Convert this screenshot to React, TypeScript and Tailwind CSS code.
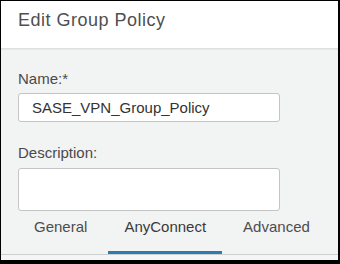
import React from "react";

export default function App() {
  const font = { fontFamily: '"Liberation Sans", Arial, sans-serif' };
  return (
    <div
      className="w-[340px] h-[264px] bg-black pl-px pt-px pr-[2px] pb-[4px]"
      style={font}
    >
      <div className="w-full h-full flex flex-col bg-[#f2f3f3] overflow-hidden">
        <div className="h-[47px] shrink-0 bg-white pl-[17px] pt-[9px]">
          <div className="text-[18px] leading-[20px] tracking-[0.5px] text-[#4f4f4f]">
            Edit Group Policy
          </div>
        </div>
        <div className="h-[2px] shrink-0 bg-gradient-to-b from-[#dcdcdc] to-[#ebebeb]" />
        <div className="flex-1 flex flex-col pl-[17px] pt-[20px]">
          <div className="text-[15px] leading-[18px] text-[#4a4a4a]">Name:*</div>
          <div className="mt-[5px] w-[262px] h-[29px] bg-white border border-[#c4c4c4] rounded-[3px] pl-[13px] flex items-center text-[15px] leading-[18px] text-[#333333]">
            SASE_VPN_Group_Policy
          </div>
          <div className="mt-[22px] text-[15px] leading-[18px] text-[#4a4a4a]">Description:</div>
          <div className="mt-[6px] w-[262px] h-[43px] bg-white border border-[#c4c4c4] rounded-[3px]" />
          <div className="mt-[6px] flex gap-[5px] text-[15px] leading-[18px] text-[#4d4d4d]">
            <div className="px-4 pb-[15px] pt-[1px] border-b-4 border-transparent">General</div>
            <div className="px-4 pb-[15px] pt-[1px] border-b-4 border-[#2a7db1] text-[#3a3a3a]">AnyConnect</div>
            <div className="px-4 pb-[15px] pt-[1px] border-b-4 border-transparent">Advanced</div>
          </div>
        </div>
        <div className="h-[1px] -mt-[6px] shrink-0 bg-[#cfcfcf]" />
        <div className="h-[5px] shrink-0 bg-[#f5f5f5]" />
      </div>
    </div>
  );
}
